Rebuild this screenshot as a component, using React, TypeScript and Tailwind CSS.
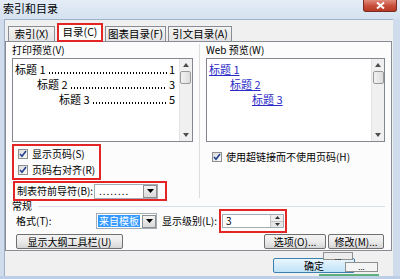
import React from 'react';

const font = "font-['Noto_Sans_CJK_SC','Noto_Sans',sans-serif]";

const Check: React.FC = () => (
  <span className="w-[10px] h-[10px] border border-[#8e8f8f] bg-gradient-to-br from-[#dcdcdc] to-[#fbfbfb] flex items-center justify-center shrink-0">
    <svg width="8" height="8" viewBox="0 0 8 8">
      <path d="M1 4 L3 6.3 L7 1" stroke="#24418f" strokeWidth="1.6" fill="none" />
    </svg>
  </span>
);

const DropBtn: React.FC = () => (
  <span className="w-[14px] h-[13px] border border-[#8e8f8f] bg-gradient-to-b from-[#f4f4f4] to-[#d9d9d9] flex items-center justify-center shrink-0">
    <svg width="7" height="4" viewBox="0 0 7 4">
      <path d="M0 0 H7 L3.5 4 Z" fill="#000" />
    </svg>
  </span>
);

const ScrollBar: React.FC = () => (
  <div className="w-[13px] h-full bg-[#f0f0f0] border-l border-[#e3e3e3] flex flex-col items-center shrink-0">
    <div className="h-[12px] flex items-center justify-center">
      <svg width="6" height="4" viewBox="0 0 6 4">
        <path d="M0 4 L3 0 L6 4 Z" fill="#4d4d4d" />
      </svg>
    </div>
    <div className="w-[11px] h-[13px] border border-[#9a9a9a] rounded-[2px] bg-gradient-to-r from-[#f2f2f2] to-[#dcdcdc]" />
    <div className="flex-1" />
    <div className="h-[12px] flex items-center justify-center">
      <svg width="6" height="4" viewBox="0 0 6 4">
        <path d="M0 0 L6 0 L3 4 Z" fill="#4d4d4d" />
      </svg>
    </div>
  </div>
);

const Button: React.FC<{ label: string; className?: string }> = ({ label, className }) => (
  <div
    className={`h-[15px] border border-[#707070] rounded-[2px] bg-gradient-to-b from-[#f4f4f4] via-[#ebebeb] to-[#d6d6d6] flex items-center justify-center text-[10px] leading-none ${className ?? ''}`}
  >
    {label}
  </div>
);

const Tab: React.FC<{ label: string; w: string; active?: boolean }> = ({ label, w, active }) =>
  active ? (
    <div className={`${w} h-[19px] -mb-px border-2 border-[#e42525] bg-white flex items-center justify-center text-[10.5px] leading-none z-10`}>
      {label}
    </div>
  ) : (
    <div className={`${w} h-[15px] border border-b-0 border-[#898c95] bg-gradient-to-b from-[#f3f3f3] to-[#e3e3e3] flex items-center justify-center text-[10.5px] leading-none`}>
      {label}
    </div>
  );

// one line of the print preview: heading, dot leader, page number
const PrintLine: React.FC<{ indent: string; n: string; page: string }> = ({ indent, n, page }) => (
  <div className={`flex items-end h-[15px] ${indent} pr-[4px] text-[11px] leading-none`}>
    <span className="whitespace-nowrap shrink-0">标题 {n}</span>
    <span className="flex-1 min-w-0 h-[2px] mb-[1px] mx-[2px] bg-[radial-gradient(circle,#000_0.7px,transparent_0.9px)] bg-[length:3px_2px] bg-repeat-x" />
    <span className="shrink-0">{page}</span>
  </div>
);

export default function App() {
  return (
    <div className={`w-[400px] h-[279px] bg-[#cfdcec] flex flex-col overflow-hidden relative ${font} text-black`}>
      {/* title bar */}
      <div className="h-[19px] bg-gradient-to-b from-[#e4ecf6] to-[#d6e2f1] flex items-start justify-between shrink-0">
        <span className="pl-[3px] pt-[3px] text-[11px] leading-none">索引和目录</span>
        <div className="w-[34px] h-[12px] mr-[3px] rounded-b-[3px] border border-t-0 border-[#7a2a20] bg-gradient-to-b from-[#e08b7c] via-[#c9503c] to-[#b73a26] flex items-center justify-center">
          <svg width="9" height="7" viewBox="0 0 9 7">
            <path d="M1 0.5 L8 6.5 M8 0.5 L1 6.5" stroke="#fff" strokeWidth="2" />
          </svg>
        </div>
      </div>

      {/* body */}
      <div className="ml-[4px] w-[389px] flex-1 bg-[#f0f0f0] border-t border-l border-[#9fb1c8] flex flex-col">
        {/* tabs */}
        <div className="flex items-end gap-[2px] pl-[3px] pt-[3px] h-[21px]">
          <Tab label="索引(X)" w="w-[47px]" />
          <Tab label="目录(C)" w="w-[46px]" active />
          <Tab label="图表目录(F)" w="w-[61px]" />
          <Tab label="引文目录(A)" w="w-[64px]" />
        </div>

        {/* tab panel */}
        <div className="h-[210px] bg-[#fcfcfc] border border-[#898c95] mr-[1px] flex flex-col px-[6px] pt-[2px]">
          <div className="flex gap-[13px]">
            {/* left column */}
            <div className="w-[183px] flex flex-col">
              <div className="h-[12px] text-[10px] leading-none pt-[1px]">打印预览(V)</div>
              <div className="h-[84px] mt-[2px] border border-[#828790] bg-white flex">
                <div className="flex-1 min-w-0 flex flex-col pt-[1px] pl-[2px]">
                  <PrintLine indent="pl-0" n="1" page="1" />
                  <PrintLine indent="pl-[22px]" n="2" page="3" />
                  <PrintLine indent="pl-[44px]" n="3" page="5" />
                </div>
                <ScrollBar />
              </div>
              <div className="w-[89px] h-[36px] mt-[2px] border-2 border-[#e42525] flex flex-col justify-center gap-[6px] pl-[4px]">
                <div className="flex items-center gap-[4px] text-[10px] leading-none">
                  <Check />
                  <span>显示页码(S)</span>
                </div>
                <div className="flex items-center gap-[4px] text-[10px] leading-none">
                  <Check />
                  <span>页码右对齐(R)</span>
                </div>
              </div>
              <div className="w-[154px] h-[20px] mt-[1px] ml-[1px] border-2 border-[#e42525] flex items-center pl-[2px] text-[10px] leading-none">
                <span className="w-[77px]">制表符前导符(B):</span>
                <div className="w-[64px] h-[15px] border border-[#a5acb5] bg-white flex items-center justify-between pl-[4px]">
                  <span className="tracking-[1px] text-[10px]">........</span>
                  <DropBtn />
                </div>
              </div>
            </div>

            {/* right column */}
            <div className="w-[181px] flex flex-col relative">
              <div className="h-[12px] text-[10px] leading-none pt-[1px]">Web 预览(W)</div>
              <div className="h-[84px] mt-[2px] border border-[#828790] bg-white flex">
                <div className="flex-1 flex flex-col pt-[1px] pl-[2px] text-[11px] leading-none text-[#2b2bc8]">
                  <div className="h-[15px] flex items-end"><span className="underline">标题 1</span></div>
                  <div className="h-[15px] flex items-end pl-[21px]"><span className="underline">标题 2</span></div>
                  <div className="h-[15px] flex items-end pl-[43px]"><span className="underline">标题 3</span></div>
                </div>
                <ScrollBar />
              </div>
              <div className="flex items-center gap-[4px] mt-[10px] pl-[6px] text-[10px] leading-none">
                <Check />
                <span>使用超链接而不使用页码(H)</span>
              </div>
              <div className="absolute -left-[7px] top-0 h-[154px] border-l border-[#dcdcdc]" />
            </div>
          </div>

          {/* 常规 */}
          <div className="flex items-center h-[10px] text-[10px] leading-none">
            <span>常规</span>
            <div className="flex-1 ml-[6px] border-t border-[#d5dfe5]" />
          </div>
          <div className="flex items-center h-[24px] -mt-[2px] text-[10px] leading-none">
            <span className="w-[84px] pl-[4px]">格式(T):</span>
            <div className="w-[61px] h-[16px] border border-[#a5acb5] bg-white flex items-center justify-between pl-[1px]">
              <span className="bg-[#3399ff] text-white px-[1px] h-[12px] flex items-center">来自模板</span>
              <DropBtn />
            </div>
            <span className="ml-[5px] w-[57px]">显示级别(L):</span>
            <div className="w-[68px] h-[24px] border-2 border-[#e42525] flex items-center pl-[1px]">
              <div className="w-[62px] h-[14px] border border-[#a5acb5] bg-white flex items-center justify-between pl-[3px]">
                <span>3</span>
                <div className="w-[13px] h-full flex flex-col border-l border-[#c5c5c5]">
                  <div className="flex-1 flex items-center justify-center bg-[#eeeeee] border-b border-[#c5c5c5]">
                    <svg width="5" height="3" viewBox="0 0 5 3"><path d="M0 3 L2.5 0 L5 3 Z" fill="#333" /></svg>
                  </div>
                  <div className="flex-1 flex items-center justify-center bg-[#e6e6e6]">
                    <svg width="5" height="3" viewBox="0 0 5 3"><path d="M0 0 L5 0 L2.5 3 Z" fill="#333" /></svg>
                  </div>
                </div>
              </div>
            </div>
          </div>
          <div className="flex items-center mt-[1px]">
            <Button label="显示大纲工具栏(U)" className="w-[107px] ml-[4px]" />
            <div className="flex-1" />
            <Button label="选项(O)..." className="w-[62px]" />
            <Button label="修改(M)..." className="w-[56px] ml-[2px] mr-[1px]" />
          </div>
        </div>

        {/* bottom buttons */}
        <div className="flex-1 flex items-start pt-[7px] pl-[268px] relative">
          <div className="w-[82px] h-[15px] border border-[#3c7fb1] rounded-[2px] bg-gradient-to-b from-[#eaf6fd] to-[#bfe2f7] flex items-center justify-center text-[10px] leading-none">
            确定
          </div>
          <div className="absolute left-[318px] top-[1px] w-[30px] h-[8px] border border-[#8f8f8f] bg-[#ececec] text-[8px] leading-none text-center">...</div>
          <div className="absolute left-[340px] top-[11px] w-[33px] h-[10px] border border-[#8f8f8f] bg-[#f4f4f4] text-[8px] leading-none text-center">...</div>
          <div className="absolute left-[314px] bottom-0 w-[60px] border-b-2 border-[#5fb07a]" />
        </div>
      </div>
      <div className="h-[3px] bg-[#bccfe6] shrink-0" />
    </div>
  );
}
